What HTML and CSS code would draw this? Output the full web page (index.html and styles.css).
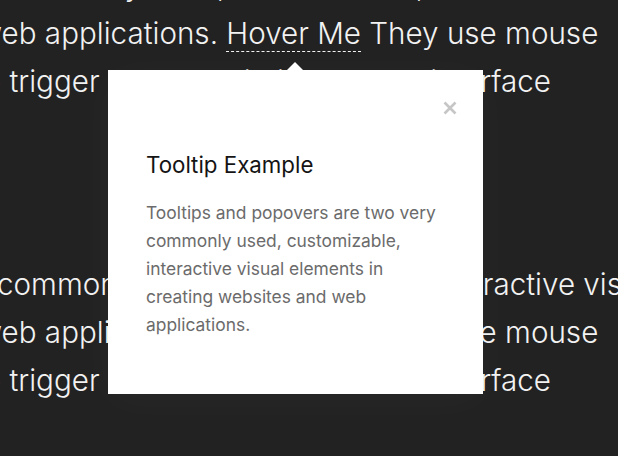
FILE: index.html
```html
<!DOCTYPE html>
<html lang="en">
<head>
<meta charset="utf-8">
<title>Tooltip Example</title>
<link rel="stylesheet" href="styles.css">
</head>
<body>
<main class="doc">
  <p class="para">
    <span class="line l1">commonly used, customizable, interactive visual</span>
    <span class="line l2">web applications. <span class="hover">Hover Me</span> They use mouse</span>
    <span class="line l3">to trigger content within the user interface</span>
  </p>
  <p class="para">
    <span class="line l1">commonly used, customizable, interactive visual</span>
    <span class="line l2">web applications. <span class="hover">Hover Me</span> They use mouse</span>
    <span class="line l3">to trigger content within the user interface</span>
  </p>
</main>
<div class="popover" role="tooltip">
  <div class="close-row">
    <svg class="close" width="14" height="14" viewBox="0 0 14 14" aria-label="Close">
      <path d="M1.5 1.5 L12.5 12.5 M12.5 1.5 L1.5 12.5" stroke="#c6c6c6" stroke-width="2.6" stroke-linecap="butt" fill="none"/>
    </svg>
  </div>
  <h3 class="title">Tooltip Example</h3>
  <p class="body">Tooltips and popovers are two very commonly used, customizable, interactive visual elements in creating websites and web applications.</p>
</div>
</body>
</html>
```
FILE: styles.css
```css
html, body {
  margin: 0;
  padding: 0;
  height: 100%;
}
body {
  background: #222222;
  overflow: hidden;
  font-family: Inter, "Noto Sans", sans-serif;
  position: relative;
}
.doc {
  margin-top: -39px;
  color: #f2f2f2;
  font-size: 29.6px;
  font-weight: 300;
  line-height: 48px;
}
.para {
  margin: 0 0 155px 0;
}
.line {
  display: block;
  white-space: nowrap;
}
.l1 { margin-left: -3px; }
.l2 { margin-left: -22px; }
.l3 { margin-left: -25px; }
.hover {
  border-bottom: 1px dashed #f2f2f2;
}
.popover {
  position: absolute;
  left: 108px;
  top: 70px;
  width: 375px;
  box-sizing: border-box;
  padding: 31px 26px 55px 38px;
  background: #ffffff;
  box-shadow: 0 6px 40px rgba(255, 255, 255, 0.03);
}
.popover::before {
  content: "";
  position: absolute;
  top: -8px;
  left: 179px;
  border-left: 8px solid transparent;
  border-right: 8px solid transparent;
  border-bottom: 8px solid #ffffff;
}
.close-row {
  display: flex;
  justify-content: flex-end;
  height: 14px;
}
.close {
  display: block;
}
.title {
  margin: 37px 12px 0 0;
  font-size: 22.3px;
  font-weight: 400;
  line-height: 25px;
  color: #141414;
}
.body {
  margin: 22px 12px 0 0;
  font-size: 17.4px;
  font-weight: 400;
  line-height: 28px;
  color: #6b6b6b;
}
```
